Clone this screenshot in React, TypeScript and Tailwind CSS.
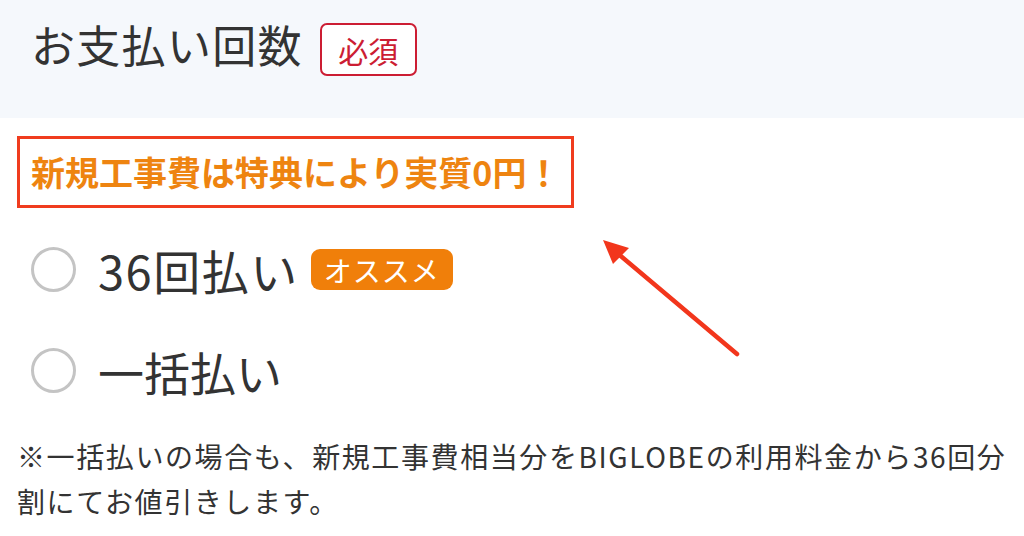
import React from 'react';

const jp = { fontFamily: '"Noto Sans CJK JP", "Noto Sans", sans-serif' };

const Radio: React.FC = () => (
  <span className="inline-block w-[45px] h-[45px] rounded-full border-[3px] border-[#c4c4c4] bg-white shrink-0" />
);

export default function App() {
  return (
    <div className="relative w-[1024px] h-[536px] bg-white overflow-hidden text-[#333]" style={jp}>
      {/* header */}
      <div className="h-[118px] bg-[#f5f8fc] flex items-start gap-[17px] pl-[31px] pt-[21px]">
        <h2 className="text-[44px] leading-[46px] tracking-[1.3px] font-normal text-[#333]">お支払い回数</h2>
        <span className="mt-[2px] flex items-center justify-center w-[97px] h-[53px] rounded-[7px] border-2 border-[#cc1d33] bg-white text-[30px] leading-none text-[#cc1d33]">
          必須
        </span>
      </div>

      <div className="px-[17px] pt-[18px]">
        <div className="w-[557px] h-[72px] border-[3px] border-[#f03c1e] flex items-center pl-[11px]">
          <p className="text-[34px] leading-none font-bold text-[#ee8410]">新規工事費は特典により実質0円！</p>
        </div>

        <div className="pl-[14px]">
          <div className="flex items-center h-[103px] mt-[10px]">
            <Radio />
            <span className="ml-[22px] text-[47px] leading-none tracking-[1.5px]">36回払い</span>
            <span className="ml-[12px] h-[41px] px-[13px] rounded-[9px] bg-[#f07f0a] text-white text-[28px] leading-none flex items-center tracking-[1px]">
              オススメ
            </span>
          </div>
          <div className="flex items-center h-[103px] -mt-[2px]">
            <Radio />
            <span className="ml-[22px] text-[46px] leading-none">一括払い</span>
          </div>
        </div>

        <p className="mt-[12px] text-[28px] leading-[45px] text-[#333] w-[992px] tracking-[1.6px]">
          ※一括払いの場合も、新規工事費相当分をBIGLOBEの利用料金から36回分割にてお値引きします。
        </p>
      </div>

      {/* annotation arrow */}
      <svg className="absolute left-[590px] top-[230px]" width="160" height="140" viewBox="0 0 160 140">
        <line x1="26" y1="22" x2="147" y2="124" stroke="#f2361c" strokeWidth="4.5" strokeLinecap="round" />
        <polygon points="13,10 39,18 23,34" fill="#f2361c" />
      </svg>
    </div>
  );
}
